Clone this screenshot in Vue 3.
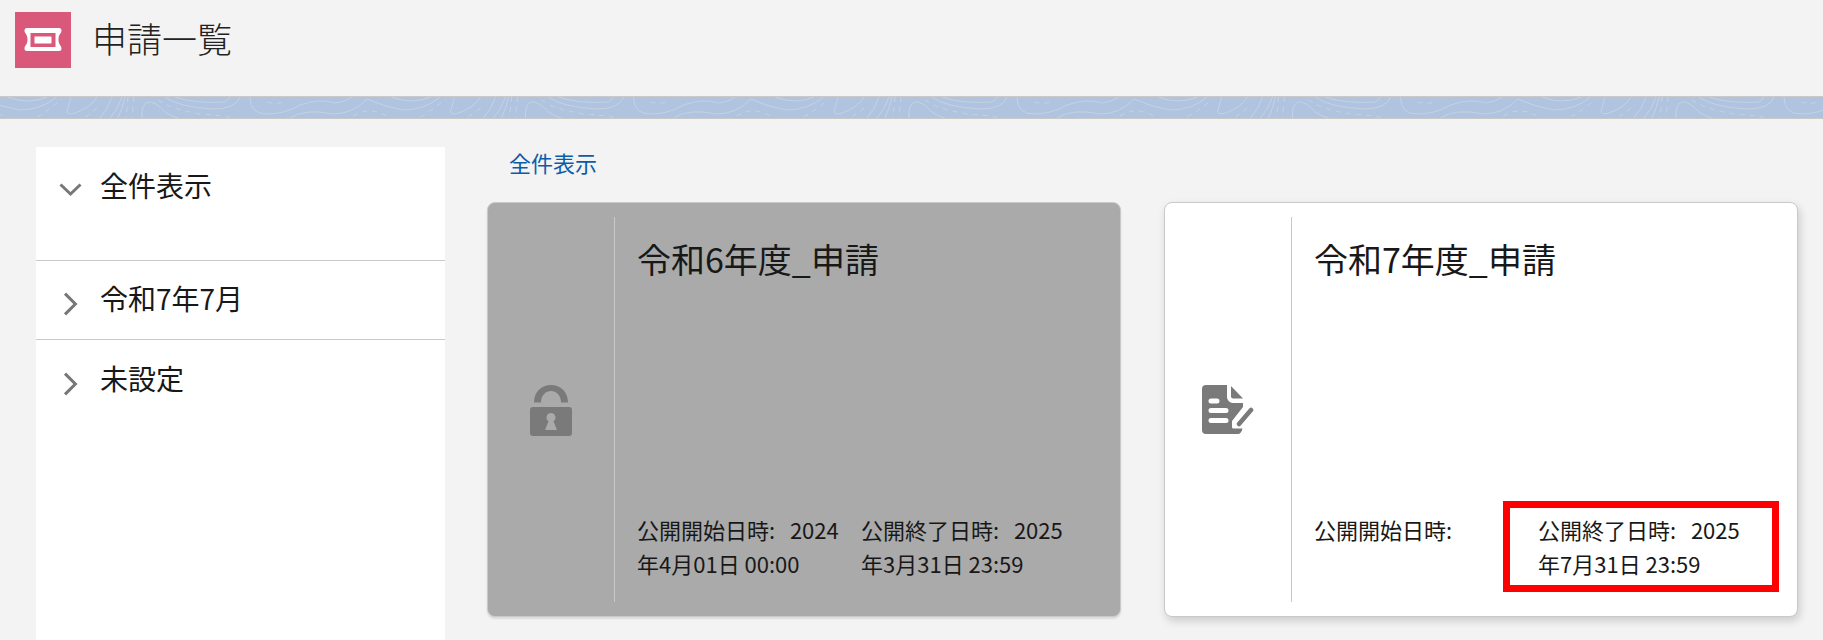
<template>
  <div class="page">
    <header class="page-header">
      <div class="app-icon">
        <svg viewBox="0 0 56 56" width="56" height="56">
          <path d="M12 16h32a2.500 2.500 0 0 1 2.500 2.500c0 3-3 3.500-3 9s3 6 3 9a2.500 2.500 0 0 1-2.500 2.500H12a2.500 2.500 0 0 1-2.500-2.500c0-3 3-3.500 3-9s-3-6-3-9A2.500 2.500 0 0 1 12 16z" fill="#fff" />
          <rect x="15.500" y="21" width="25" height="14" fill="#da5879" />
          <rect x="19.500" y="24.500" width="17" height="7" fill="#fff" />
        </svg>
      </div>
      <h1>申請一覧</h1>
    </header>

    <div class="band">
      <svg viewBox="0 0 1823 21" width="1823" height="21">
        <g v-for="n in 6" :key="n" :transform="`translate(${(n - 2) * 383.5} 0)`">
          <path
            v-for="(line, i) in bandLines"
            :key="i"
            :d="line.d"
            :stroke-dasharray="line.dash ? '5 5' : null"
            fill="none"
            stroke="#c4d2e7"
            stroke-width="1"
          />
        </g>
      </svg>
    </div>

    <div class="content">
      <aside class="sidebar">
        <div v-for="item in menu" :key="item.label" class="menu-row" :class="{ open: item.open }">
          <svg v-if="item.open" class="chevron" viewBox="0 0 24 24" width="24" height="24">
            <path d="M1.500 6.500l10 9.500 10-9.500" fill="none" stroke="#777" stroke-width="3" />
          </svg>
          <svg v-else class="chevron" viewBox="0 0 24 24" width="24" height="24">
            <path d="M6 1.600L16.400 12 6 22.400" fill="none" stroke="#777" stroke-width="3" />
          </svg>
          <span>{{ item.label }}</span>
        </div>
      </aside>

      <main class="main">
        <a class="filter-link">全件表示</a>
        <div class="cards">
          <div v-for="card in cards" :key="card.title" class="card" :class="{ locked: card.locked }">
            <div class="card-icon">
              <svg v-if="card.locked" viewBox="0 0 42 52" width="42" height="52">
                <path d="M4 18.500C4 8 11.500 1 21 1s17 7 17 17.500h-7C31 11.500 26.500 7 21 7s-10 4.500-10 11.500z" fill="#7a7a7a" />
                <path fill-rule="evenodd" d="M3 23h36a3 3 0 0 1 3 3v23a3 3 0 0 1-3 3H3a3 3 0 0 1-3-3V26a3 3 0 0 1 3-3zm18 6a4.500 4.500 0 0 0-2.500 8.200L15 46h12l-3.500-8.800A4.500 4.500 0 0 0 21 29z" fill="#7a7a7a" />
              </svg>
              <svg v-else viewBox="0 0 52 50" width="52" height="50">
                <path fill-rule="evenodd" d="M4 0h21v12a6 6 0 0 0 6 6h10v4L30 36v6c0 1 .8 1.500 2 1.500h8.500C40 47 38 49 36 49H4a4 4 0 0 1-4-4V4a4 4 0 0 1 4-4zM9 13.500a2.500 2.500 0 0 0 0 5h6a2.500 2.500 0 0 0 0-5zM9 23a2.500 2.500 0 0 0 0 5h15a2.500 2.500 0 0 0 0-5zM9 33a2.500 2.500 0 0 0 0 5h15a2.500 2.500 0 0 0 0-5z" fill="#7a7a7a" />
                <path d="M29 1l12 12.500H31a2 2 0 0 1-2-2z" fill="#7a7a7a" />
                <path d="M37 39L49 25" fill="none" stroke="#7a7a7a" stroke-width="4.500" stroke-linecap="round" />
              </svg>
            </div>
            <div class="card-body">
              <h2>{{ card.title }}</h2>
              <div class="dates">
                <div class="date">{{ card.start }}</div>
                <div class="date">{{ card.end }}</div>
              </div>
            </div>
            <div v-if="card.marked" class="marker"></div>
          </div>
        </div>
      </main>
    </div>
  </div>
</template>

<script setup>
const menu = [
  { label: '全件表示', open: true },
  { label: '令和7年7月' },
  { label: '未設定' },
];

const cards = [
  {
    title: '令和6年度_申請',
    start: '公開開始日時:\u00a0\u00a0\u00a02024年4月01日 00:00',
    end: '公開終了日時:\u00a0\u00a0\u00a02025年3月31日 23:59',
    locked: true,
  },
  {
    title: '令和7年度_申請',
    start: '公開開始日時:',
    end: '公開終了日時:\u00a0\u00a0\u00a02025年7月31日 23:59',
    marked: true,
  },
];

// contour lines of the header band, one tile is 383.5px wide
const bandLines = [
  { d: 'M71 0L67 15Q68 18 75 16Q90 11 97 0' },
  { d: 'M100 21Q108 12 112 0' },
  { d: 'M110 21Q118 12 122 0' },
  { d: 'M118 21Q123 10 125 0' },
  { d: 'M128 0L126 21', dash: true },
  { d: 'M134 0L132 21', dash: true },
  { d: 'M142 21Q141 7 148 5Q155 4 165 15Q172 20 178 21' },
  { d: 'M158 3Q170 12 200 17Q220 18 233 21', dash: true },
  { d: 'M165 0Q178 10 213 12Q236 12 240 0' },
  { d: 'M175 0Q195 7 225 5Q228 3 230 0' },
  { d: 'M250 0Q250 17 267 17Q285 17 300 8Q320 1 335 6Q345 5 352 0' },
  { d: 'M290 21Q305 11 333 17Q353 17 367 2Q385 10 403 13Q425 13 440 0' },
  { d: 'M353 19Q370 8 390 21', dash: true },
  { d: 'M8 0Q28 8 47 0' },
  { d: 'M37 20Q50 12 62 2', dash: true },
  { d: 'M267 5Q278 8 285 4', dash: true },
  { d: 'M85 20L100 9', dash: true },
];
</script>

<style>
html,
body {
  margin: 0;
  background: #f3f3f3;
}
</style>

<style scoped>
.page {
  height: 640px;
  overflow: hidden;
  background: #f3f3f3;
  color: #181818;
  font-family: "Noto Sans CJK JP", "Noto Sans", sans-serif;
}

/* Header */
.page-header {
  display: flex;
  align-items: flex-start;
  height: 97px;
  padding: 12px 0 0 15px;
  box-sizing: border-box;
  border-bottom: 1px solid #c9c9c9;
}

.app-icon {
  width: 56px;
  height: 56px;
  background: #da5879;
}

.page-header h1 {
  margin: 0 0 0 21px;
  font-size: 35px;
  font-weight: 300;
  line-height: 52px;
  color: #222;
}

.band {
  height: 21px;
  overflow: hidden;
  background: #b0c4df;
  border-bottom: 1px solid #c9c9c9;
}

.band svg {
  display: block;
}

.content {
  display: flex;
  padding-top: 28px;
}

/* Left filter list */
.sidebar {
  width: 409px;
  height: 493px;
  margin-left: 36px;
  background: #fff;
}

.menu-row {
  display: flex;
  align-items: center;
  gap: 17px;
  height: 79px;
  padding-left: 23px;
  border-bottom: 1px solid #c9c9c9;
  font-size: 28px;
  line-height: 38px;
  box-sizing: border-box;
}

.menu-row span {
  margin-bottom: 4px;
}

.menu-row:last-child {
  border-bottom: none;
}

.menu-row.open {
  height: 114px;
  align-items: flex-start;
  padding-top: 19px;
}

.chevron {
  flex: none;
  margin-top: 8px;
}

.menu-row.open .chevron {
  margin-top: 12px;
}

.main {
  flex: 1;
  padding-left: 42px;
}

.filter-link {
  display: block;
  padding-left: 22px;
  font-size: 22px;
  line-height: 30px;
  color: #0b5cab;
}

.cards {
  display: flex;
  gap: 43px;
  margin-top: 25px;
}

/* Cards */
.card {
  position: relative;
  display: flex;
  width: 634px;
  height: 415px;
  padding: 14px 0;
  box-sizing: border-box;
  background: #fff;
  border: 1px solid #c9c9c9;
  border-radius: 8px;
  box-shadow: 2px 4px 8px rgba(0, 0, 0, 0.16);
}

.card.locked {
  background: #aaa;
  box-shadow: 0 2px 2px rgba(0, 0, 0, 0.1);
}

.card-icon {
  display: flex;
  align-items: center;
  justify-content: center;
  flex: none;
  width: 126px;
  border-right: 1px solid #c9c9c9;
}

.card-body {
  display: flex;
  flex: 1;
  flex-direction: column;
  justify-content: space-between;
  padding: 0 20px 0 22px;
}

.card-body h2 {
  margin: 0;
  padding-top: 14px;
  font-size: 34px;
  font-weight: 400;
  line-height: 56px;
}

.dates {
  display: grid;
  grid-template-columns: 204px 204px;
  column-gap: 20px;
  padding-bottom: 22px;
  font-size: 22px;
  line-height: 34px;
}

.marker {
  position: absolute;
  left: 338px;
  top: 298px;
  width: 276px;
  height: 91px;
  box-sizing: border-box;
  border: 7px solid #f00;
}
</style>
